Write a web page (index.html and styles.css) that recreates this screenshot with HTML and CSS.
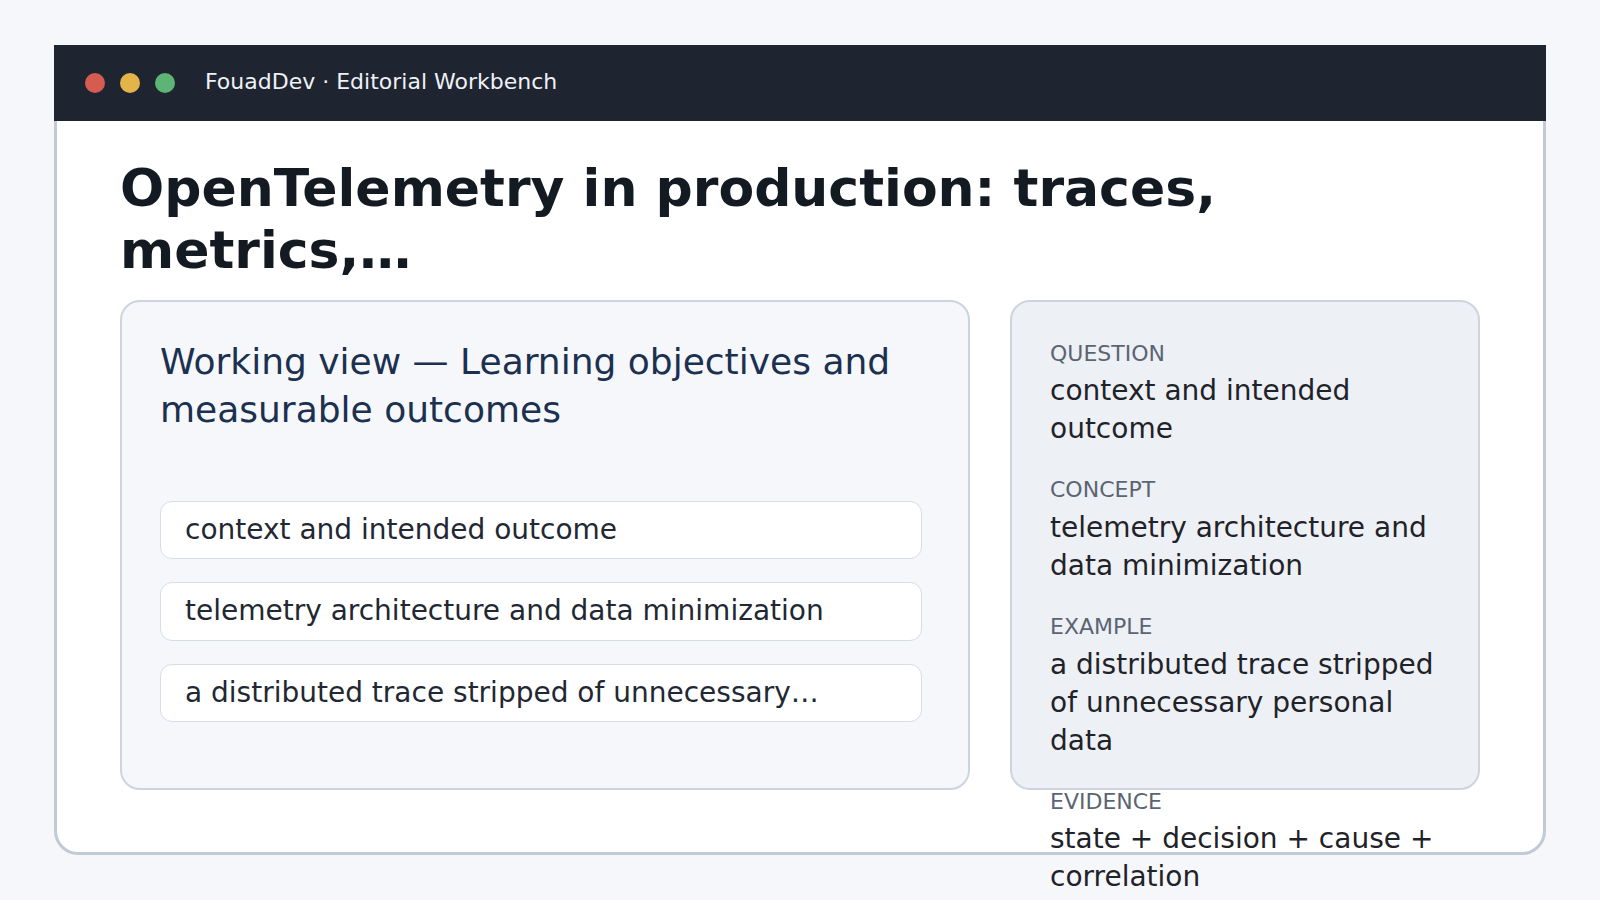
FILE: index.html
```html
<!DOCTYPE html>
<html lang="en">

<head>
  <meta charset="utf-8" />
  <title>FouadDev · Editorial Workbench</title>
  <meta name="viewport" content="width=device-width, initial-scale=1" />
  <link rel="stylesheet" href="styles.css">
</head>

<body>
  <div class="page">
    <div class="window">
      <div class="titlebar">
        <div class="dots">
          <span class="dot red"></span>
          <span class="dot yellow"></span>
          <span class="dot green"></span>
        </div>
        <span class="app-name">FouadDev · Editorial Workbench</span>
      </div>

      <div class="window-body">
        <h1 class="post-title">OpenTelemetry in production: traces, metrics,…</h1>

        <div class="workspace">
          <!-- main working card -->
          <section class="working-card">
            <h2 class="working-title">Working view — Learning objectives and measurable outcomes</h2>
            <ul class="steps">
              <li class="step">context and intended outcome</li>
              <li class="step">telemetry architecture and data minimization</li>
              <li class="step">a distributed trace stripped of unnecessary…</li>
            </ul>
          </section>

          <!-- side notes -->
          <aside class="notes-card">
            <div class="note">
              <div class="note-label">QUESTION</div>
              <div class="note-value">context and intended outcome</div>
            </div>
            <div class="note">
              <div class="note-label">CONCEPT</div>
              <div class="note-value">telemetry architecture and data minimization</div>
            </div>
            <div class="note">
              <div class="note-label">EXAMPLE</div>
              <div class="note-value">a distributed trace stripped of unnecessary personal data</div>
            </div>
            <div class="note">
              <div class="note-label">EVIDENCE</div>
              <div class="note-value">state + decision + cause + correlation</div>
            </div>
          </aside>
        </div>
      </div>
    </div>
  </div>
</body>

</html>
```

FILE: styles.css
```css
/* Reset & globals */
* {
  box-sizing: border-box;
  padding: 0;
  margin: 0;
}

body {
  background-color: #f5f7fa;
  font-family: "DejaVu Sans", Verdana, sans-serif;
  color: #1f2329;
}

.page {
  padding: 45px 54px;
}

/* Window chrome */
.titlebar {
  height: 76px;
  display: flex;
  align-items: center;
  padding-left: 31px;
  background-color: #1f2431;
}

.dots {
  display: flex;
  gap: 15px;
  margin-right: 30px;
}

.dot {
  width: 20px;
  height: 20px;
  border-radius: 50%;
}

.red {
  background-color: #d65b50;
}

.yellow {
  background-color: #e4b44b;
}

.green {
  background-color: #5cb574;
}

.app-name {
  color: #eef1f5;
  font-size: 22px;
  margin-bottom: 4px;
}

.window-body {
  background-color: #fff;
  border: 3px solid #c2cad6;
  border-top: none;
  border-radius: 0 0 24px 24px;
  padding: 36px 63px 62px;
}

.post-title {
  font-size: 52px;
  line-height: 1.2;
  font-weight: bold;
  color: #141a22;
  margin-bottom: 18px;
}

/* Two-column workspace */
.workspace {
  display: grid;
  grid-template-columns: 1fr 470px;
  grid-template-rows: 490px;
  gap: 40px;
}

.working-card {
  background-color: #f5f7fb;
  border: 2px solid #cdd4df;
  border-radius: 20px;
  padding: 36px 46px 36px 38px;
}

.working-title {
  font-size: 36px;
  line-height: 48px;
  font-weight: normal;
  color: #1c3050;
}

.steps {
  list-style: none;
  display: flex;
  flex-direction: column;
  gap: 23px;
  margin-top: 67px;
}

.step {
  background-color: #fff;
  border: 1px solid #d7dde7;
  border-radius: 12px;
  padding: 10px 24px;
  font-size: 28px;
  line-height: 1.3;
  color: #222833;
  white-space: nowrap;
}

.notes-card {
  background-color: #edf0f5;
  border: 2px solid #cdd4df;
  border-radius: 20px;
  padding: 38px 38px 36px;
  display: flex;
  flex-direction: column;
  gap: 28px;
}

.note-label {
  font-size: 22px;
  line-height: 1.3;
  color: #5b6472;
  margin-bottom: 4px;
}

.note-value {
  font-size: 28px;
  line-height: 38px;
  color: #1f2329;
}
```
